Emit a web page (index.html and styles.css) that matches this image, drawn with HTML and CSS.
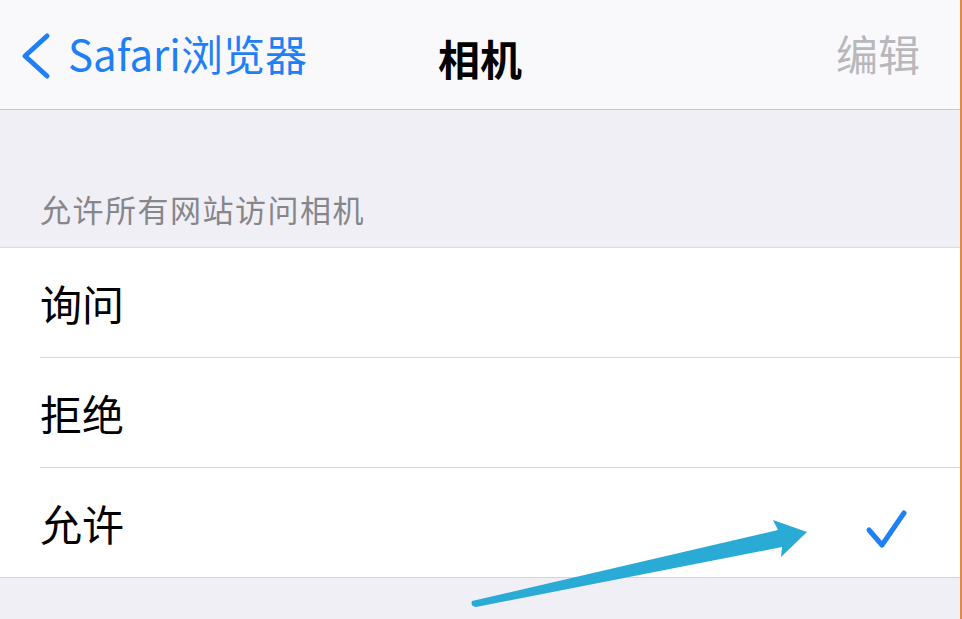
FILE: index.html
```html
<!DOCTYPE html>
<html lang="zh-CN">
<head>
    <meta charset="UTF-8">
    <meta name="viewport" content="width=device-width, initial-scale=1.0">
    <title>相机</title>
    <link rel="stylesheet" href="styles.css">
</head>
<body>

<div class="screen">
    <div class="nav-bar">
        <div class="nav-back">
            <svg class="chevron" width="32" height="48" viewBox="0 0 32 48">
                <path d="M27 4 L5 24 L27 44" fill="none" stroke="#1f80f5" stroke-width="5" stroke-linecap="round" stroke-linejoin="round"/>
            </svg>
            <span>Safari浏览器</span>
        </div>
        <div class="nav-title">相机</div>
        <div class="nav-edit">编辑</div>
    </div>

    <div class="section-header">允许所有网站访问相机</div>

    <ul class="option-list">
        <li class="option">询问</li>
        <li class="option">拒绝</li>
        <li class="option">允许
            <svg class="check" width="44" height="40" viewBox="0 0 44 40">
                <path d="M4 21 L17 36 L39 4" fill="none" stroke="#1f7ff5" stroke-width="5" stroke-linecap="round" stroke-linejoin="round"/>
            </svg>
        </li>
    </ul>

    <div class="footer"></div>

    <!-- 标注箭头 -->
    <svg class="pointer" width="962" height="619" viewBox="0 0 962 619">
        <path d="M472 601 L778 530 L773 520 L807 532 L781 557 L782 547 L476 607 Q470 606 472 601 Z" fill="#2aabd6"/>
    </svg>
</div>

</body>
</html>
```

FILE: styles.css
```css
body {
    margin: 0;
    font-family: "Noto Sans CJK SC", "Noto Sans", sans-serif;
    background-color: #f0eff5;
}

.screen {
    position: relative;
    width: 960px;
    height: 619px;
    border-right: 2px solid #e08a4a;
    background-color: #f0eff5;
    overflow: hidden;
}

.nav-bar {
    height: 109px;
    background-color: #f9f9fb;
    border-bottom: 1px solid #c8c8cc;
    display: flex;
    align-items: center;
    justify-content: space-between;
    padding: 0 40px 0 20px;
    font-size: 42px;
    position: relative;
}

.nav-back {
    display: flex;
    align-items: center;
    gap: 16px;
    color: #1f80f5;
}

.nav-back span {
    margin-top: -4px;
}

.chevron {
    margin-top: 2px;
}

.nav-title {
    position: absolute;
    left: 438px;
    top: 27px;
    font-weight: bold;
    color: #000;
}

.nav-edit {
    color: #b8b8bc;
    margin-top: -4px;
}

.section-header {
    height: 138px;
    box-sizing: border-box;
    padding: 0 0 16px 40px;
    display: flex;
    align-items: flex-end;
    font-size: 31px;
    letter-spacing: 1.5px;
    color: #86868b;
    border-bottom: 1px solid #dcdce0;
}

.option-list {
    list-style: none;
    margin: 0;
    padding: 0 0 0 40px;
    background-color: #fff;
    border-bottom: 1px solid #d6d6da;
}

.option {
    height: 110px;
    box-sizing: border-box;
    display: flex;
    align-items: center;
    justify-content: space-between;
    padding-right: 51px;
    font-size: 42px;
    color: #000;
    border-bottom: 1px solid #d8d8dc;
}

.option:last-child {
    border-bottom: none;
    height: 109px;
}

.check {
    margin-top: 12px;
}

.footer {
    height: 40px;
}

.pointer {
    position: absolute;
    left: 0;
    top: 0;
}
```
